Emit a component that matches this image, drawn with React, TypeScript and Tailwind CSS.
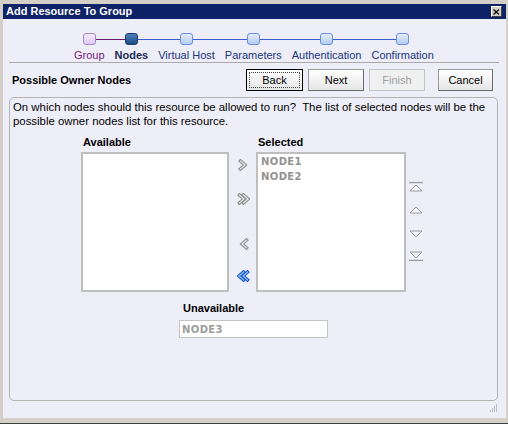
import React from "react";

const steps = [
  { label: "Group", kind: "done" },
  { label: "Nodes", kind: "current" },
  { label: "Virtual Host", kind: "todo" },
  { label: "Parameters", kind: "todo" },
  { label: "Authentication", kind: "todo" },
  { label: "Confirmation", kind: "todo" },
];

function Chevron({ dir, double, blue }: { dir: "r" | "l"; double?: boolean; blue?: boolean }) {
  const outer = blue ? "#1d5cc8" : "#8e8e8e";
  const inner = blue ? "#9cc2f4" : "#ececec";
  const one = dir === "r" ? "M2.5 2 L7 6 L2.5 10" : "M8.5 2 L4 6 L8.5 10";
  const two = dir === "r" ? "M6.5 2 L11 6 L6.5 10" : "M4.5 2 L0 6 L4.5 10";
  const w = double ? 13 : 11;
  const shift = dir === "l" && double ? "translate(2 0)" : "";
  return (
    <svg width={w} height={12} viewBox={`0 0 ${w} 12`}>
      <g transform={shift} fill="none" strokeLinejoin="miter" strokeLinecap="square">
        <path d={one} stroke={outer} strokeWidth={3.4} />
        <path d={one} stroke={inner} strokeWidth={1.2} />
        {double && <path d={two} stroke={outer} strokeWidth={3.4} />}
        {double && <path d={two} stroke={inner} strokeWidth={1.2} />}
      </g>
    </svg>
  );
}

function Tri({ up, bar }: { up: boolean; bar?: boolean }) {
  return (
    <svg width={16} height={10} viewBox="0 0 16 10">
      {up ? (
        <>
          {bar && <rect x={1} y={0} width={14} height={1.2} fill="#9a9a9a" />}
          <polygon points="2,9 8,3 14,9" fill="#f4f4f8" stroke="#9a9a9a" strokeWidth={1} />
        </>
      ) : (
        <>
          <polygon points="2,1 8,7 14,1" fill="#f4f4f8" stroke="#9a9a9a" strokeWidth={1} />
          {bar && <rect x={1} y={8.8} width={14} height={1.2} fill="#9a9a9a" />}
        </>
      )}
    </svg>
  );
}

function Grip() {
  const dots: [number, number][] = [];
  for (let r = 0; r < 4; r++) {
    for (let c = 3 - r; c < 4; c++) dots.push([c * 2 + 1, r * 2 + 1]);
  }
  return (
    <svg width={9} height={8} viewBox="0 0 9 8">
      {dots.map(([x, y], i) => (
        <rect key={i} x={x} y={y - 0.5} width={1} height={1} fill="#8c8c8c" />
      ))}
    </svg>
  );
}

export default function App() {
  return (
    <div className="w-[508px] h-[424px] bg-[#d4d0c8] pt-[4px] pl-[3px] pr-[2px] pb-[5px] flex flex-col border-b border-b-[#404040] font-['Liberation_Sans',Arial,sans-serif] text-[11px] text-black">
      {/* Title bar */}
      <div className="h-[15px] bg-[#0e2268] flex items-center justify-between pl-[3px]">
        <span className="text-white font-bold text-[11px] leading-[15px]">Add Resource To Group</span>
        <div className="w-[11px] h-[11px] mr-[4px] bg-[#d4d0c8] border-t border-l border-t-white border-l-white border-b border-r border-b-[#404040] border-r-[#404040] flex items-center justify-center">
          <svg width={7} height={6} viewBox="0 0 7 6">
            <path d="M0.5 0.5 L6 5.5 M6 0.5 L0.5 5.5" stroke="#000" strokeWidth={1.2} />
          </svg>
        </div>
      </div>

      {/* Content */}
      <div className="flex-1 bg-[#eeeef8] flex flex-col">
        {/* Stepper */}
        <div className="flex ml-[66px] pt-[14px]">
          {steps.map((s, i) => (
            <div key={s.label} className="relative flex flex-col items-center px-[5px]">
              {i > 0 && (
                <div className={`absolute top-[6px] left-0 right-1/2 h-px ${i === 1 ? "bg-[#6c1670]" : "bg-[#3a5cd0]"}`} />
              )}
              {i < steps.length - 1 && (
                <div className={`absolute top-[6px] left-1/2 right-0 h-px ${i === 0 ? "bg-[#6c1670]" : "bg-[#3a5cd0]"}`} />
              )}
              <div
                className={`relative w-[13px] h-[12px] rounded-[3px] border ${
                  s.kind === "done"
                    ? "border-[#a888c8] bg-gradient-to-b from-[#f4ecfc] to-[#dcc8f0]"
                    : s.kind === "current"
                    ? "border-[#1a3c6c] bg-gradient-to-b from-[#4f82be] to-[#1c4c84]"
                    : "border-[#6a8ee0] bg-gradient-to-b from-[#e4eefc] to-[#b4ccf4]"
                }`}
              />
              <span
                className={`mt-[3px] leading-[14px] whitespace-nowrap ${
                  s.kind === "done"
                    ? "text-[#7a1a7e]"
                    : s.kind === "current"
                    ? "text-[#1c2c54] font-bold"
                    : "text-[#20367c]"
                }`}
              >
                {s.label}
              </span>
            </div>
          ))}
        </div>

        {/* Separator */}
        <div className="ml-[6px] mr-[7px] h-px bg-[#aaaaaa]" />

        {/* Header row with buttons */}
        <div className="flex items-center mt-[6px] h-[22px]">
          <span className="pl-[9px] font-bold">Possible Owner Nodes</span>
          <div className="ml-auto mr-[13px] flex">
            <button className="w-[57px] h-[22px] border border-black bg-gradient-to-b from-white to-[#e6e6e6] p-[2px]">
              <div className="w-full h-full border border-dotted border-[#444] flex items-center justify-center leading-none">
                Back
              </div>
            </button>
            <button className="ml-[5px] w-[56px] h-[22px] border border-[#9a9a9a] border-r-[#6a6a6a] border-b-[#6a6a6a] bg-gradient-to-b from-white to-[#e6e6e6] flex items-center justify-center">
              Next
            </button>
            <button className="ml-[5px] w-[56px] h-[22px] border border-[#c4c4c4] bg-[#f0f0f0] text-[#a0a0a0] flex items-center justify-center">
              Finish
            </button>
            <button className="ml-[13px] w-[55px] h-[22px] border border-[#9a9a9a] border-r-[#6a6a6a] border-b-[#6a6a6a] bg-gradient-to-b from-white to-[#e6e6e6] flex items-center justify-center">
              Cancel
            </button>
          </div>
        </div>

        {/* Panel */}
        <div className="flex-1 ml-[6px] mr-[8px] mt-[6px] border border-[#b4b4b4] rounded-[5px] pt-[2px] pl-[3px] flex flex-col">
          <p className="leading-[14px] whitespace-nowrap text-[11.4px]">
            On which nodes should this resource be allowed to run?&nbsp; The list of selected nodes will be the
            <br />
            possible owner nodes list for this resource.
          </p>

          <div className="flex mt-[7px] ml-[68px]">
            {/* Available */}
            <div className="flex flex-col w-[148px]">
              <span className="font-bold leading-[14px] pl-[2px]">Available</span>
              <div className="mt-[3px] h-[140px] bg-white border-2 border-[#bfbfbf]" />
            </div>

            {/* Move arrows */}
            <div className="flex flex-col items-center ml-[8px] w-[13px] pt-[24px]">
              <Chevron dir="r" />
              <div className="mt-[22px]"><Chevron dir="r" double /></div>
              <div className="mt-[33px]"><Chevron dir="l" /></div>
              <div className="mt-[20px]"><Chevron dir="l" double blue /></div>
            </div>

            {/* Selected */}
            <div className="flex flex-col w-[150px] ml-[6px]">
              <span className="font-bold leading-[14px] pl-[2px]">Selected</span>
              <div className="mt-[3px] h-[140px] bg-white border-2 border-[#bfbfbf] pl-[3px] font-['DejaVu_Sans',sans-serif] font-bold text-[10px] leading-[15px] tracking-[0.4px] text-[#929292]">
                <div>NODE1</div>
                <div>NODE2</div>
              </div>
            </div>

            {/* Order arrows */}
            <div className="flex flex-col ml-[2px] pt-[47px]">
              <Tri up bar />
              <div className="mt-[12px]"><Tri up /></div>
              <div className="mt-[16px]"><Tri up={false} /></div>
              <div className="mt-[11px]"><Tri up={false} bar /></div>
            </div>
          </div>

          {/* Unavailable */}
          <div className="flex flex-col ml-[166px] mt-[9px] w-[149px]">
            <span className="font-bold leading-[14px] pl-[4px]">Unavailable</span>
            <div className="mt-[5px] h-[18px] bg-white border border-[#c4c4c4] pl-[2px] flex items-center font-['DejaVu_Sans',sans-serif] font-bold text-[10px] tracking-[0.4px] text-[#9c9c9c]">
              NODE3
            </div>
          </div>
        </div>

        {/* Grip row */}
        <div className="h-[17px] flex justify-end items-start pt-[3px] pr-[8px]">
          <Grip />
        </div>
      </div>
    </div>
  );
}
